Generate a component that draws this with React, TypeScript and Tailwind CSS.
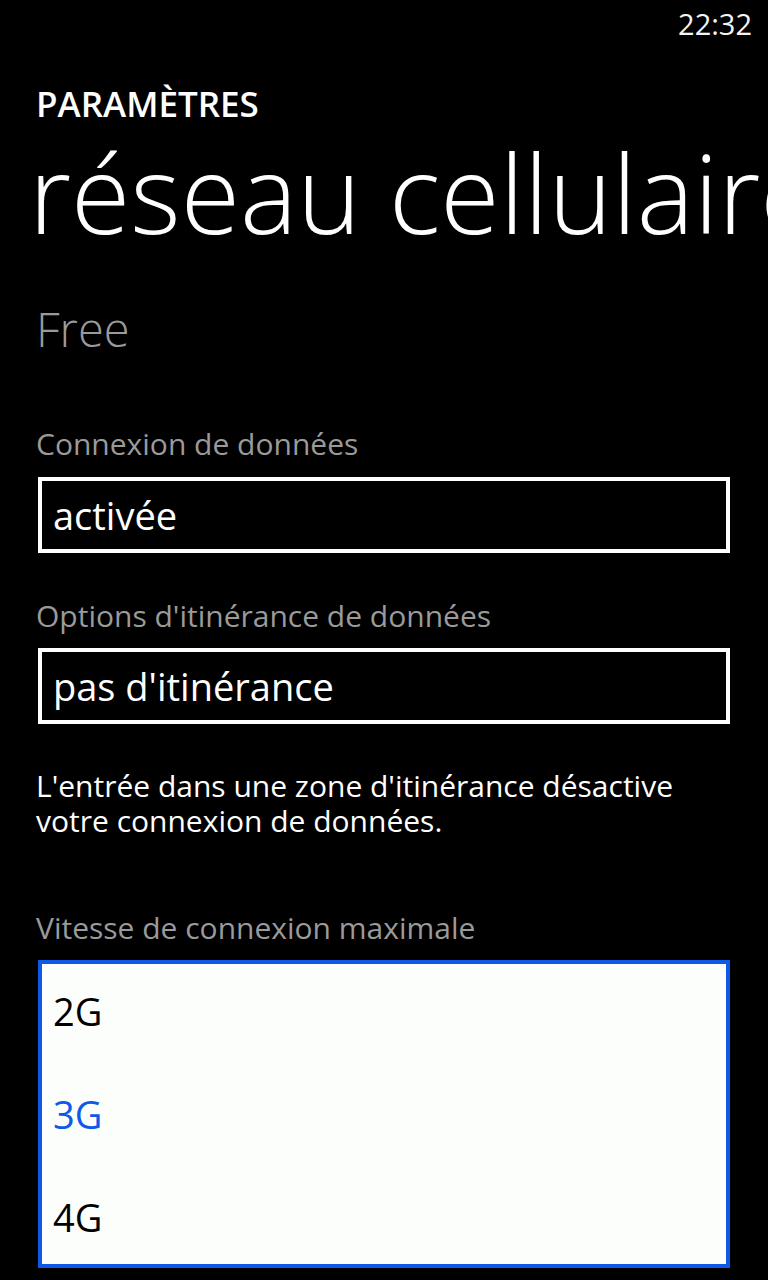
import React from "react";

export default function App() {
  return (
    <div
      className="w-[768px] h-[1280px] bg-black text-white overflow-hidden"
      style={{ fontFamily: '"Open Sans", "Noto Sans", sans-serif' }}
    >
      <div className="h-[48px] flex justify-end items-center pr-[16px]">
        <span className="text-[29px] leading-[48px] text-[#f4f4f4]">22:32</span>
      </div>
      <div className="pl-[36px]">
        <div className="mt-[36px] h-[40px] text-[35px] leading-[40px] font-semibold">PARAMÈTRES</div>
        <div className="mt-[9px] h-[120px] ml-[-7px] text-[108px] leading-[120px] font-light whitespace-nowrap overflow-hidden">
          réseau cellulaire
        </div>
        <div className="mt-[48px] h-[56px] text-[47px] leading-[56px] text-[#9a9a9a] font-light">Free</div>

        <div className="mt-[69px] h-[36px] text-[30px] leading-[36px] text-[#9a9a9a]">Connexion de données</div>
        <div className="mt-[15px] ml-[2px] w-[692px] h-[76px] border-4 border-white pl-[11px] text-[38px] leading-[68px]">
          activée
        </div>

        <div className="mt-[45px] h-[36px] text-[30px] leading-[36px] text-[#9a9a9a]">
          Options d'itinérance de données
        </div>
        <div className="mt-[14px] ml-[2px] w-[692px] h-[76px] border-4 border-white pl-[11px] text-[38px] leading-[68px]">
          pas d'itinérance
        </div>

        <p className="mt-[44px] w-[694px] text-[30px] leading-[35px]">
          L'entrée dans une zone d'itinérance désactive votre connexion de données.
        </p>

        <div className="mt-[72px] h-[36px] text-[30px] leading-[36px] text-[#9a9a9a]">
          Vitesse de connexion maximale
        </div>
        <div className="mt-[14px] ml-[2px] w-[692px] h-[308px] border-4 border-[#0f58e8] bg-[#fcfefc] pl-[11px] pt-[7px] flex flex-col gap-[23px]">
          <div className="h-[80px] text-[38px] leading-[80px] text-black">2G</div>
          <div className="h-[80px] text-[38px] leading-[80px] text-[#0f58e8]">3G</div>
          <div className="h-[80px] text-[38px] leading-[80px] text-black">4G</div>
        </div>
      </div>
    </div>
  );
}
